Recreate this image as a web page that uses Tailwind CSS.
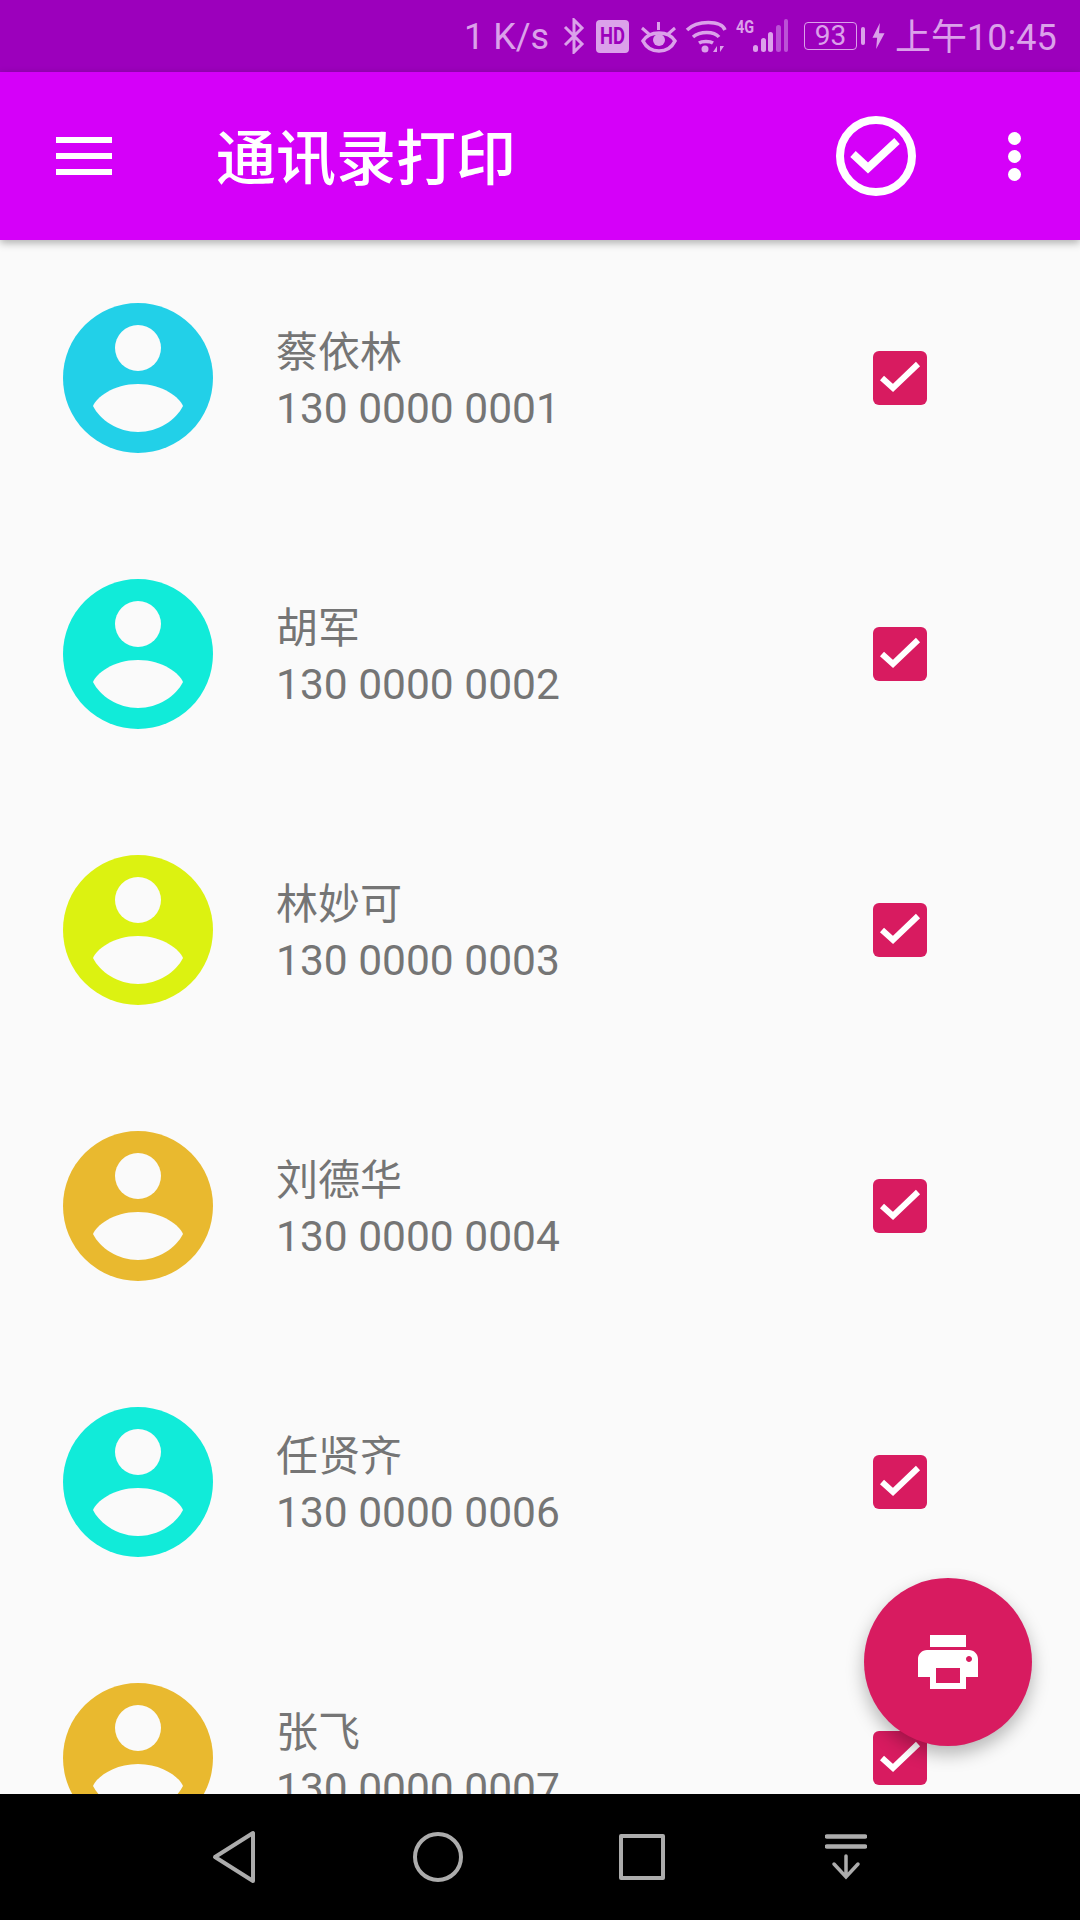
<!DOCTYPE html>
<html lang="zh-CN">
<head>
  <meta charset="UTF-8">
  <meta name="viewport" content="width=device-width, initial-scale=1.0">
  <title>通讯录打印</title>
  <script src="https://cdn.jsdelivr.net/npm/@tailwindcss/browser@4"></script>
</head>
<body class="bg-[#fafafa]">
  <div class="relative flex flex-col w-[1080px] h-[1920px] overflow-hidden font-[Roboto,'Noto_Sans_CJK_SC',sans-serif]">

    <!-- Status bar -->
    <div class="flex items-center h-[72px] shrink-0 bg-[#9c00bc] text-[#dba1ea]">
      <span class="ml-[464px] mt-[2px] w-[92px] text-[36px] leading-none whitespace-nowrap">1 K/s</span>
      <svg class="ml-[6px] w-[24px] h-[36px]" viewBox="0 0 24 36" fill="none" stroke="#dba1ea" stroke-width="3"><path d="M3 9l17 17-8 8V2l8 8L3 27"/></svg>
      <div class="ml-[10px] flex items-center justify-center w-[33px] h-[33px] rounded-[4px] bg-[#dba1ea] text-[#9c00bc] text-[23px] font-bold leading-none">
        <span class="scale-x-[0.8]">HD</span>
      </div>
      <svg class="ml-[11px] w-[38px] h-[33px]" viewBox="0 0 38 33" fill="none" stroke="#dba1ea" stroke-width="3.500">
        <path d="M3 21c3-5 9-8 16-8s13 3 16 8c-3 6-9 10-16 10S6 27 3 21z"/>
        <circle cx="19" cy="20" r="6" fill="#dba1ea" stroke="none"/>
        <path d="M18.500 2v8M2 8l8 7M35 8l-8 7" stroke-width="3"/>
      </svg>
      <svg class="ml-[7px] w-[42px] h-[34px]" viewBox="0 0 42 34" fill="none" stroke="#dba1ea" stroke-width="3.500">
        <path d="M2 11c10-10 34-10 38 0M8 18c7-6 21-6 26 0M14 24c3-2 11-2 14 0"/>
        <circle cx="20" cy="30" r="3.500" fill="#dba1ea" stroke="none"/>
        <path d="M28 33l4-6v6zM35 27v6l4-6z" fill="#dba1ea" stroke="none"/>
      </svg>
      <div class="relative ml-[9px] w-[56px] h-[36px]">
        <span class="absolute left-0 top-[0px] origin-left scale-x-[0.8] text-[18px] font-bold leading-[18px]">4G</span>
        <svg class="absolute left-0 top-0 w-[56px] h-[36px]" viewBox="0 0 56 36">
          <rect x="17" y="27" width="5" height="7" rx="2.500" fill="#dba1ea"/>
          <rect x="25" y="20" width="5" height="14" rx="2.500" fill="#dba1ea"/>
          <rect x="32" y="14" width="5" height="20" rx="2.500" fill="#dba1ea"/>
          <rect x="40" y="7" width="5" height="27" rx="2.500" fill="#bb52d6"/>
          <rect x="48" y="1" width="4" height="33" rx="2" fill="#bb52d6"/>
        </svg>
      </div>
      <div class="ml-[12px] flex items-center justify-center w-[53px] h-[28px] rounded-[4px] border-[1.5px] border-[#dba1ea] text-[28px] leading-none">93</div>
      <div class="ml-[4px] w-[4px] h-[18px] rounded-[2px] bg-[#dba1ea]"></div>
      <svg class="ml-[7px] w-[13px] h-[26px]" viewBox="0 0 13 28"><path d="M8 0L0 16h5l-1 12 9-17H7z" fill="#dba1ea"/></svg>
      <span class="ml-[10px] mt-[4px] text-[36px] leading-none whitespace-nowrap">上午10:45</span>
    </div>

    <!-- App bar -->
    <div class="relative z-10 flex items-center h-[168px] shrink-0 bg-[#d500f9] text-white shadow-[0_3px_8px_rgba(0,0,0,0.3)]">
      <div class="ml-[56px] flex flex-col gap-[10px] w-[56px]">
        <div class="h-[6px] bg-white"></div>
        <div class="h-[6px] bg-white"></div>
        <div class="h-[6px] bg-white"></div>
      </div>
      <h1 class="ml-[104px] mt-[8px] w-[300px] text-[60px] font-medium leading-none whitespace-nowrap">通讯录打印</h1>
      <svg class="ml-[320px] w-[80px] h-[80px]" viewBox="0 0 80 80" fill="none" stroke="white" stroke-width="8"><circle cx="40" cy="40" r="36"/><path d="M17 38l15 14 29-27"/></svg>
      <div class="ml-[92px] flex flex-col gap-[5px]">
        <div class="w-[13px] h-[13px] rounded-full bg-white"></div>
        <div class="w-[13px] h-[13px] rounded-full bg-white"></div>
        <div class="w-[13px] h-[13px] rounded-full bg-white"></div>
      </div>
    </div>

    <!-- Contact list -->
    <div id="contacts" class="flex-1 overflow-hidden"></div>

    <!-- Print button -->
    <div class="absolute left-[864px] top-[1578px] z-10 flex items-center justify-center w-[168px] h-[168px] rounded-full bg-[#d81b60] shadow-[0_8px_18px_rgba(0,0,0,0.28)]">
      <svg class="w-[72px] h-[72px]" viewBox="0 0 24 24" fill="white"><path d="M19 8H5c-1.66 0-3 1.34-3 3v6h4v4h12v-4h4v-6c0-1.66-1.34-3-3-3zm-3 11H8v-5h8v5zm3-7c-.55 0-1-.45-1-1s.45-1 1-1 1 .45 1 1-.45 1-1 1zm-1-9H6v4h12V3z"/></svg>
    </div>

    <!-- Navigation bar -->
    <div class="relative z-20 flex items-center h-[126px] shrink-0 bg-black">
      <svg class="ml-[211px] w-[46px] h-[54px]" viewBox="0 0 46 54" fill="none" stroke="#acacac" stroke-width="4" stroke-linejoin="round"><path d="M42 3v48L4 27z"/></svg>
      <svg class="ml-[156px] w-[50px] h-[50px]" viewBox="0 0 50 50" fill="none" stroke="#acacac" stroke-width="4"><circle cx="25" cy="25" r="23"/></svg>
      <svg class="ml-[156px] w-[46px] h-[46px]" viewBox="0 0 46 46" fill="none" stroke="#acacac" stroke-width="4" stroke-linejoin="round"><rect x="2" y="2" width="42" height="42"/></svg>
      <svg class="ml-[160px] w-[42px] h-[46px]" viewBox="0 0 42 46" fill="none" stroke="#acacac" stroke-linecap="round"><path d="M2 2.500h38M2 12.500h38" stroke-width="4.500"/><path d="M21 22v20M9 30l12 13 12-13" stroke-width="3.500"/></svg>
    </div>
  </div>

  <script>
    const contacts = [
      { name: '蔡依林', phone: '130 0000 0001', color: '#22d0e8' },
      { name: '胡军', phone: '130 0000 0002', color: '#11ebd9' },
      { name: '林妙可', phone: '130 0000 0003', color: '#dcf211' },
      { name: '刘德华', phone: '130 0000 0004', color: '#e9b92f' },
      { name: '任贤齐', phone: '130 0000 0006', color: '#11ebd9' },
      { name: '张飞', phone: '130 0000 0007', color: '#e9b92f' }
    ];

    document.getElementById('contacts').innerHTML = contacts.map(c => `
      <div class="flex items-center h-[276px]">
        <svg class="ml-[63px] w-[150px] h-[150px] shrink-0" viewBox="0 0 150 150">
          <circle cx="75" cy="75" r="75" style="fill: ${c.color}"/>
          <circle cx="75" cy="45" r="23" fill="#fafafa"/>
          <path d="M30 103C33 95 50 81 75 81S117 95 120 103C113 117 95 129 75 129S37 117 30 103z" fill="#fafafa"/>
        </svg>
        <div class="ml-[63px] mt-[6px] w-[597px] flex flex-col text-[#757575]">
          <span class="text-[42px] leading-[56px]">${c.name}</span>
          <span class="text-[42.500px] leading-[56px] whitespace-nowrap">${c.phone}</span>
        </div>
        <svg class="w-[54px] h-[54px] shrink-0" viewBox="0 0 54 54">
          <rect width="54" height="54" rx="6" fill="#d81b60"/>
          <path d="M9 27l11 10 25-24" fill="none" stroke="white" stroke-width="6"/>
        </svg>
      </div>`).join('');
  </script>
</body>
</html>
